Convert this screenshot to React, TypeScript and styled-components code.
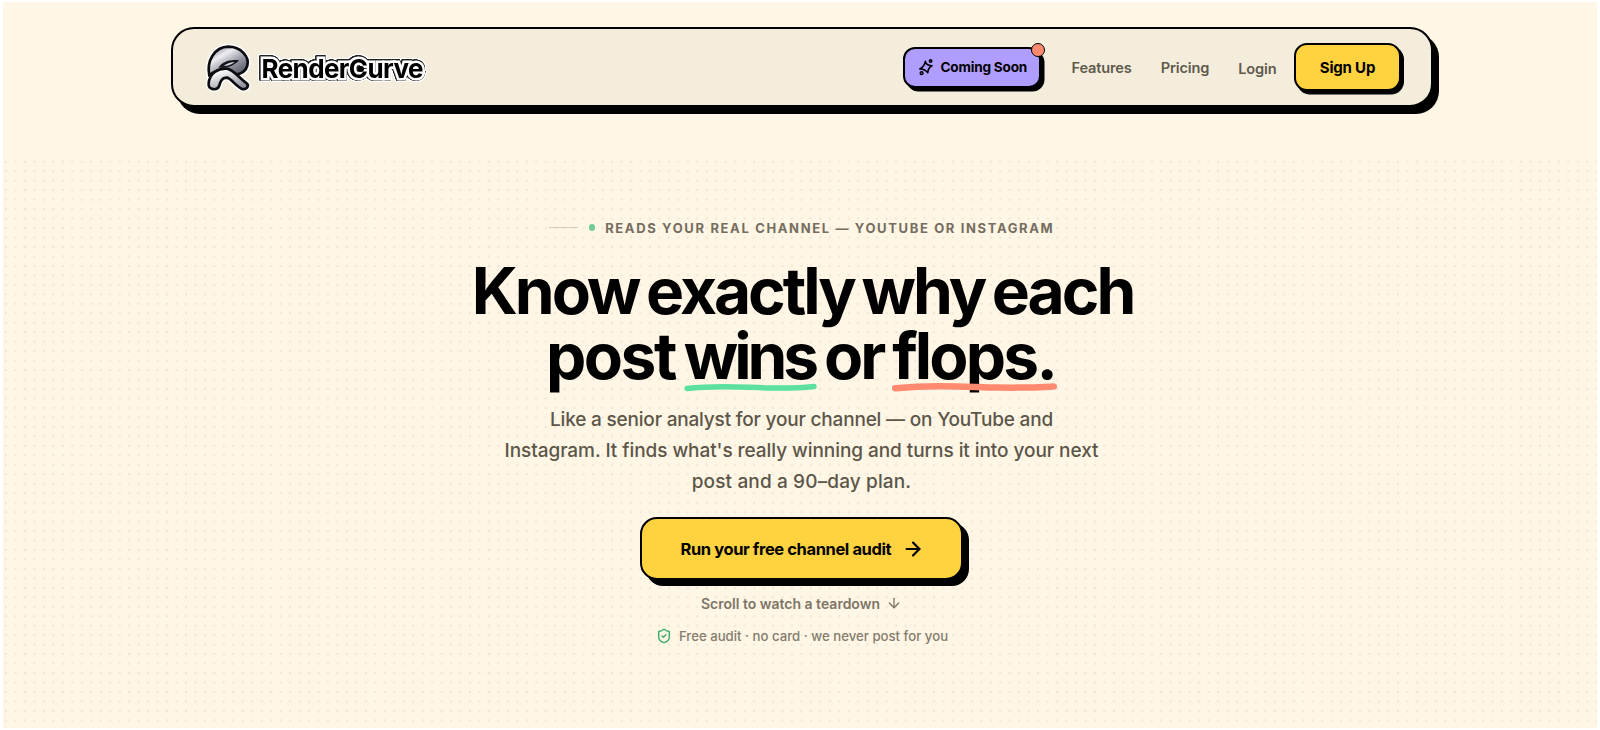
import { ArrowDown, ArrowRight, ShieldCheck } from 'lucide-react';
import styled, { createGlobalStyle } from 'styled-components';

const colors = {
  ink: '#000000',
  page: '#fff6e5',
  nav: '#f5eddb',
  yellow: '#ffd23f',
  purple: '#b19dff',
  coral: '#ff8a70',
  mint: '#5be0a0',
  green: '#3fae6c',
};

const subtitleLines = [
  { text: 'Like a senior analyst for your channel — on YouTube and', tracking: -0.19 },
  {
    text: "Instagram. It finds what's really winning and turns it into your next",
    tracking: -0.06,
  },
  { text: 'post and a 90–day plan.', tracking: 0.14 },
];

const LogoMark = () => {
  const dome =
    'M19 104 C10 60 34 18 76 17 C114 17 140 48 133 74 C129 90 114 99 96 101 L72 86 C48 84 30 92 19 104 Z';
  const leg =
    'M17 127 C19 97 46 81 72 83 C92 86 104 108 131 127 C140 135 130 148 116 143 C98 136 86 113 72 110 C56 110 52 122 48 136 C43 149 15 148 17 127 Z';

  return (
    <MarkSvg viewBox="0 0 156 165">
      <defs>
        <linearGradient id="dome" x1="0.1" y1="0" x2="0.9" y2="1">
          <stop offset="0" stopColor="#77798a" />
          <stop offset="0.3" stopColor="#eeeef2" />
          <stop offset="0.6" stopColor="#9698a4" />
          <stop offset="1" stopColor="#4d505c" />
        </linearGradient>
        <linearGradient id="leg" x1="0" y1="0" x2="0.6" y2="1">
          <stop offset="0.2" stopColor="#ffffff" />
          <stop offset="1" stopColor="#8f919c" />
        </linearGradient>
      </defs>
      <g fill="#fff" stroke="#fff" strokeWidth="17" strokeLinejoin="round">
        <path d={dome} />
        <path d={leg} />
      </g>
      <g stroke="#0b0b10" strokeWidth="8" strokeLinejoin="round">
        <path d={dome} fill="url(#dome)" />
        <path d={leg} fill="url(#leg)" />
      </g>
      <path d="M46 80 C58 62 82 54 108 58 C96 72 78 80 60 80 Z" fill="#15161c" />
      <path d="M62 75 C72 67 84 63 95 63 C88 70 76 75 62 75 Z" fill="#d4d5dc" />
    </MarkSvg>
  );
};

const SparkleIcon = () => (
  <SparkleSvg viewBox="0 0 16 18">
    <path
      d="M7.4 3.4 C8.1 6.4 9.4 7.3 14 7.8 C11 9.2 10 10.6 9.8 14.8 C8 12 6.4 11.1 1.8 11 C5.2 9.2 6.6 7.6 7.4 3.4 Z"
      strokeWidth="1.6"
    />
    <circle cx="12.6" cy="3" r="1.2" strokeWidth="1.5" />
    <circle cx="3.6" cy="15.2" r="1.4" strokeWidth="1.5" />
  </SparkleSvg>
);

const App = () => (
  <>
    <GlobalStyle />
    <Page>
      <Nav>
        <Logo>
          <LogoMark />
          <Wordmark>
            RenderCurve
            <CurveDot />
          </Wordmark>
        </Logo>
        <NavItems>
          <ComingSoon>
            <SparkleIcon />
            Coming Soon
            <Notification />
          </ComingSoon>
          <NavLink>Features</NavLink>
          <NavLink>Pricing</NavLink>
          <LoginLink>Login</LoginLink>
          <SignUp>Sign Up</SignUp>
        </NavItems>
      </Nav>

      <Hero>
        <Eyebrow>
          <Rule />
          <Dot />
          READS YOUR REAL CHANNEL — YOUTUBE OR INSTAGRAM
        </Eyebrow>

        <Title>
          <TitleLine $wordSpacing={-4.5}>Know exactly why each</TitleLine>
          <TitleLine $wordSpacing={-3.2} $shift={4}>
            <Word $tracking={-2.5}>post</Word>{' '}
            <Word $tracking={-4.1}>
              wins
              <Underline viewBox="0 0 132 10" preserveAspectRatio="none">
                <path d="M3 6.5 C35 2.5 60 5.5 85 6 S115 6 129 4.5" stroke={colors.mint} />
              </Underline>
            </Word>{' '}
            or{' '}
            <Word $tracking={-2.8}>
              flops.
              <Underline viewBox="0 0 132 10" preserveAspectRatio="none" $thickness={6.5}>
                <path d="M3 6.2 C35 2.5 60 5 85 5.5 S115 5.5 129 4.5" stroke={colors.coral} />
              </Underline>
            </Word>
          </TitleLine>
        </Title>

        <Subtitle>
          {subtitleLines.map(({ text, tracking }) => (
            <SubtitleLine key={text} $tracking={tracking}>
              {text}
            </SubtitleLine>
          ))}
        </Subtitle>

        <AuditButton>
          Run your free channel audit
          <ArrowRight size={22} strokeWidth={2.4} />
        </AuditButton>

        <ScrollHint>
          Scroll to watch a teardown
          <ArrowDown size={16} strokeWidth={2} />
        </ScrollHint>

        <Reassurance>
          <ShieldCheck size={16} strokeWidth={2.2} color={colors.green} />
          Free audit · no card · we never post for you
        </Reassurance>
      </Hero>
    </Page>
  </>
);

const GlobalStyle = createGlobalStyle`
  * {
    box-sizing: border-box;
  }
  body {
    margin: 0;
    background: #ffffff;
    font-family: Inter, 'Liberation Sans', sans-serif;
    color: ${colors.ink};
  }
  button {
    font-family: inherit;
    color: inherit;
    cursor: pointer;
  }
`;

const Page = styled.div`
  display: flex;
  flex-direction: column;
  height: 726px;
  margin: 2px 3px;
  padding-top: 25px;
  background: ${colors.page};
  overflow: hidden;
`;

const Nav = styled.nav`
  display: flex;
  align-items: center;
  justify-content: space-between;
  flex-shrink: 0;
  width: 1262px;
  height: 80px;
  margin-left: 168px;
  padding: 0 30px;
  background: ${colors.nav};
  border: 2px solid ${colors.ink};
  border-radius: 23px;
  box-shadow: 6px 7px 0 ${colors.ink};
`;

const Logo = styled.div`
  display: flex;
  align-items: center;
`;

const MarkSvg = styled.svg`
  width: 52px;
  height: 55px;
  margin-top: 2px;
`;

/* White body around the letters, a thin dark line, then a white edge. */
const Wordmark = styled.span`
  position: relative;
  margin: 4px 0 0 6.5px;
  font-size: 26px;
  font-weight: 700;
  line-height: 32px;
  letter-spacing: -0.6px;
  -webkit-text-stroke: 5px #fff;
  paint-order: stroke fill;
  filter: drop-shadow(0.8px 0 0 #222) drop-shadow(-0.8px 0 0 #222) drop-shadow(0 0.8px 0 #222)
    drop-shadow(0 -0.8px 0 #222) drop-shadow(1px 0 0 #fff) drop-shadow(-1px 0 0 #fff)
    drop-shadow(0 1px 0 #fff) drop-shadow(0 -1px 0 #fff);
`;

const CurveDot = styled.span`
  position: absolute;
  top: 13px;
  left: 96px;
  width: 6px;
  height: 6px;
  background: ${colors.ink};
  border-radius: 50%;
`;

const NavItems = styled.div`
  display: flex;
  align-items: center;
`;

const ComingSoon = styled.button`
  position: relative;
  display: flex;
  align-items: center;
  gap: 6.5px;
  width: 138px;
  height: 41px;
  margin: 1px 30px 0 0;
  padding: 0 0 1px 12.5px;
  background: ${colors.purple};
  border: 2px solid ${colors.ink};
  border-radius: 12px;
  box-shadow: 3.5px 3.5px 0 ${colors.ink};
  font-size: 13.6px;
  font-weight: 700;
  letter-spacing: -0.2px;
  white-space: nowrap;
`;

const SparkleSvg = styled.svg`
  width: 16px;
  height: 18px;
  flex-shrink: 0;
  fill: none;
  stroke: ${colors.ink};
  stroke-linejoin: round;
`;

const Notification = styled.span`
  position: absolute;
  top: -6.5px;
  right: -6px;
  width: 14px;
  height: 14px;
  background: ${colors.coral};
  border: 1.5px solid ${colors.ink};
  border-radius: 50%;
`;

const NavLink = styled.a`
  margin-right: 29px;
  padding-top: 2px;
  color: #5f5a4e;
  font-size: 14.6px;
  font-weight: 600;
  letter-spacing: -0.15px;
`;

const LoginLink = styled(NavLink)`
  margin-right: 17.5px;
  padding-top: 4px;
`;

const SignUp = styled.button`
  width: 107px;
  height: 48px;
  padding: 1px 0 0;
  background: ${colors.yellow};
  border: 2px solid ${colors.ink};
  border-radius: 13px;
  box-shadow: 3px 3.5px 0 ${colors.ink};
  font-size: 15px;
  font-weight: 700;
  letter-spacing: -0.2px;
`;

const Hero = styled.section`
  display: flex;
  flex: 1;
  flex-direction: column;
  align-items: center;
  margin-top: 50px;
  padding: 62.5px 0 0 3px;
  background-image: radial-gradient(circle, #f1e6d4 0.9px, transparent 1.6px);
  background-size: 9.475px 9.475px;
  background-position: -1.7px 0;
`;

const Eyebrow = styled.div`
  display: flex;
  align-items: center;
  height: 16px;
  color: #746d60;
  font-size: 13px;
  font-weight: 700;
  letter-spacing: 1.64px;
  line-height: 16px;
`;

const Rule = styled.span`
  width: 29px;
  height: 1px;
  margin-right: 11px;
  background: #d3cbbb;
`;

const Dot = styled.span`
  width: 6.5px;
  height: 6.5px;
  margin-right: 10px;
  background: #74cb98;
  border-radius: 50%;
`;

const Title = styled.h1`
  margin: 23.5px 0 0 2px;
  font-size: 64px;
  font-weight: 700;
  line-height: 64.6px;
  letter-spacing: -3px;
  text-align: center;
  white-space: nowrap;
`;

const TitleLine = styled.div<{ $wordSpacing: number; $shift?: number }>`
  padding-right: ${({ $shift = 0 }) => $shift}px;
  word-spacing: ${({ $wordSpacing }) => $wordSpacing}px;
`;

const Word = styled.span<{ $tracking: number }>`
  position: relative;
  display: inline-block;
  letter-spacing: ${({ $tracking }) => $tracking}px;
`;

const Underline = styled.svg<{ $thickness?: number }>`
  position: absolute;
  left: 0;
  bottom: -3.5px;
  width: calc(100% + 2px);
  height: 10px;
  fill: none;
  stroke-width: ${({ $thickness = 5.5 }) => $thickness};
  stroke-linecap: round;
`;

const Subtitle = styled.p`
  margin: 16.5px 0 0;
  color: #5c564a;
  font-size: 19px;
  font-weight: 500;
  line-height: 30.9px;
  text-align: center;
`;

const SubtitleLine = styled.span<{ $tracking: number }>`
  display: block;
  letter-spacing: ${({ $tracking }) => $tracking}px;
`;

const AuditButton = styled.button`
  display: flex;
  align-items: center;
  gap: 11px;
  width: 323px;
  height: 63px;
  margin-top: 20px;
  padding: 0 0 0 38.5px;
  background: ${colors.yellow};
  border: 2px solid ${colors.ink};
  border-radius: 17px;
  box-shadow: 6px 6px 0 ${colors.ink};
  font-size: 16.5px;
  font-weight: 700;
  letter-spacing: -0.4px;
  white-space: nowrap;
`;

const ScrollHint = styled.div`
  display: flex;
  align-items: center;
  gap: 6px;
  height: 20px;
  margin-top: 13px;
  color: #7d7567;
  font-size: 14px;
  font-weight: 600;
`;

const Reassurance = styled.div`
  display: flex;
  align-items: center;
  gap: 7px;
  height: 20px;
  margin: 13px 0 0 1px;
  color: #857d6e;
  font-size: 13.2px;
  font-weight: 500;
`;

export default App;
